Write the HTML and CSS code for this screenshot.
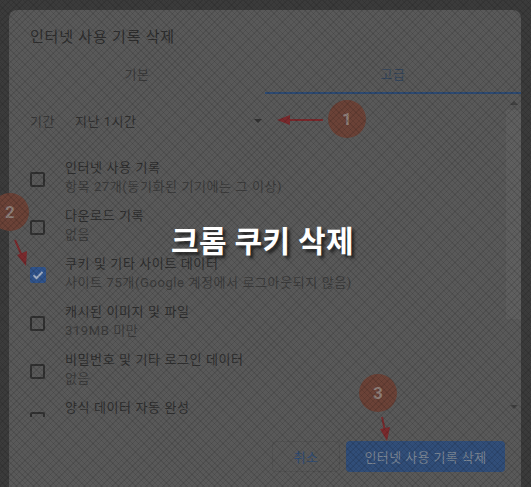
FILE: index.html
```html
<!DOCTYPE html>
<html lang="ko">
<head>
    <meta charset="UTF-8">
    <meta name="viewport" content="width=device-width, initial-scale=1.0">
    <title>인터넷 사용 기록 삭제</title>
    <link rel="stylesheet" href="styles.css">
</head>
<body>
    <div class="page">
        <div class="dialog">
            <h1 class="title">인터넷 사용 기록 삭제</h1>

            <!-- Tabs -->
            <div class="tabs">
                <div class="tab">기본</div>
                <div class="tab active">고급</div>
            </div>

            <!-- Scroll area -->
            <div class="scroll-area">
                <div class="content">
                    <div class="period">
                        <span class="period-label">기간</span>
                        <span class="select">지난 1시간 <span class="caret"></span></span>
                    </div>

                    <div class="item">
                        <span class="checkbox"></span>
                        <div class="item-text">
                            <div class="label">인터넷 사용 기록</div>
                            <div class="sub">항목 27개(동기화된 기기에는 그 이상)</div>
                        </div>
                    </div>
                    <div class="item">
                        <span class="checkbox"></span>
                        <div class="item-text">
                            <div class="label">다운로드 기록</div>
                            <div class="sub">없음</div>
                        </div>
                    </div>
                    <div class="item">
                        <span class="checkbox checked">
                            <svg width="16" height="16" viewBox="0 0 16 16"><path d="M3.5 8.2l3 3L12.5 5" fill="none" stroke="#9fadc2" stroke-width="2"/></svg>
                        </span>
                        <div class="item-text">
                            <div class="label">쿠키 및 기타 사이트 데이터</div>
                            <div class="sub">사이트 75개(Google 계정에서 로그아웃되지 않음)</div>
                        </div>
                    </div>
                    <div class="item">
                        <span class="checkbox"></span>
                        <div class="item-text">
                            <div class="label">캐시된 이미지 및 파일</div>
                            <div class="sub">319MB 미만</div>
                        </div>
                    </div>
                    <div class="item">
                        <span class="checkbox"></span>
                        <div class="item-text">
                            <div class="label">비밀번호 및 기타 로그인 데이터</div>
                            <div class="sub">없음</div>
                        </div>
                    </div>
                    <div class="item">
                        <span class="checkbox"></span>
                        <div class="item-text">
                            <div class="label">양식 데이터 자동 완성</div>
                            <div class="sub">&nbsp;</div>
                        </div>
                    </div>
                </div>
                <div class="scrollbar">
                    <span class="sb-up"></span>
                    <span class="sb-thumb"></span>
                    <span class="sb-down"></span>
                </div>
            </div>

            <!-- Buttons -->
            <div class="actions">
                <button class="btn-cancel">취소</button>
                <button class="btn-delete">인터넷 사용 기록 삭제</button>
            </div>
        </div>
    </div>

    <!-- Annotations -->
    <div class="marker m1">1</div>
    <div class="marker m2">2</div>
    <div class="marker m3">3</div>
    <svg class="arrows" width="531" height="487" viewBox="0 0 531 487">
        <g stroke="#7a2a2d" stroke-width="2" fill="#7a2a2d">
            <line x1="323" y1="120" x2="288" y2="120"/>
            <polygon points="277,120 290,115 290,125" stroke="none"/>
            <line x1="15" y1="240" x2="22" y2="256"/>
            <polygon points="26,266 17,255 27,251" stroke="none"/>
            <line x1="382" y1="417" x2="385" y2="431"/>
            <polygon points="387,441 380,429 390,427" stroke="none"/>
        </g>
    </svg>

    <div class="dim"></div>
    <div class="caption">크롬 쿠키 삭제</div>
</body>
</html>
```

FILE: styles.css
```css
* {
    margin: 0;
    padding: 0;
    box-sizing: border-box;
}

body {
    font-family: Roboto, "Noto Sans CJK KR", sans-serif;
    background-color: #3b3b3b;
    height: 487px;
    overflow: hidden;
    color: #313131;
}

.page {
    padding: 10px 10px 0 9px;
}

/* Dialog */
.dialog {
    width: 512px;
    height: 477px;
    background-color: #595959;
    border-radius: 8px 8px 0 0;
    display: flex;
    flex-direction: column;
}

.title {
    font-size: 15px;
    font-weight: normal;
    line-height: 22px;
    letter-spacing: 0.8px;
    padding: 16px 21px 0;
    color: #2e2e2e;
}

.tabs {
    display: grid;
    grid-template-columns: 1fr 1fr;
}

.tab {
    height: 46px;
    padding-top: 6px;
    display: flex;
    align-items: center;
    justify-content: center;
    font-size: 13px;
    letter-spacing: 0.5px;
    color: #3b3b3b;
    border-bottom: 2px solid transparent;
}

.tab.active {
    color: #34465c;
    border-bottom-color: #2d4a72;
}

/* Scroll area */
.scroll-area {
    display: flex;
    height: 323px;
    overflow: hidden;
}

.content {
    flex: 1;
    padding: 14px 0 0 21px;
}

.period {
    display: flex;
    align-items: center;
    height: 24px;
    font-size: 13px;
    letter-spacing: 0.5px;
    margin-bottom: 25px;
}

.period-label {
    width: 45px;
    color: #3a3a3a;
}

.select {
    width: 187px;
    display: flex;
    align-items: center;
    justify-content: space-between;
    color: #323232;
}

.caret {
    width: 0;
    height: 0;
    border-left: 4px solid transparent;
    border-right: 4px solid transparent;
    border-top: 4px solid #333;
    margin-top: 2px;
}

.item {
    display: flex;
    align-items: center;
    height: 48px;
    padding-bottom: 8px;
}

.checkbox {
    width: 15px;
    height: 15px;
    border: 2px solid #313131;
    border-radius: 2px;
    margin: 4px 20px 0 0;
    flex-shrink: 0;
    display: flex;
}

.checkbox.checked {
    width: 16px;
    height: 16px;
    margin-right: 19px;
    border: none;
    background-color: #30548c;
}

.item-text {
    font-size: 13px;
    line-height: 19px;
    letter-spacing: 0.6px;
}

.label {
    color: #2f2f2f;
}

.sub {
    color: #3c3c3c;
}

/* Fake scrollbar */
.scrollbar {
    width: 15px;
    display: flex;
    flex-direction: column;
    align-items: center;
    padding-top: 7px;
}

.sb-up,
.sb-down {
    width: 0;
    height: 0;
    border-left: 4px solid transparent;
    border-right: 4px solid transparent;
}

.sb-up {
    border-bottom: 4px solid #414141;
}

.sb-down {
    border-top: 4px solid #414141;
    margin-top: 86px;
}

.sb-thumb {
    width: 15px;
    height: 209px;
    margin-top: 5px;
    background-color: #5f5f5f;
}

/* Buttons */
.actions {
    display: flex;
    justify-content: flex-end;
    gap: 6px;
    padding: 24px 16px 0 0;
}

.actions button {
    font-family: inherit;
    font-size: 13px;
    letter-spacing: 0.4px;
    height: 31px;
    border-radius: 4px;
}

.btn-cancel {
    width: 68px;
    background: none;
    border: 1px solid #525252;
    color: #2e4c75;
}

.btn-delete {
    width: 159px;
    background-color: #314e79;
    border: none;
    color: #7a8594;
}

/* Annotations */
.marker {
    position: absolute;
    width: 38px;
    height: 38px;
    border-radius: 50%;
    background-color: #6b4237;
    color: #8d7d77;
    font-size: 17px;
    font-weight: bold;
    display: flex;
    align-items: center;
    justify-content: center;
}

.m1 { left: 328px; top: 100px; }
.m2 { left: -9px; top: 193px; }
.m3 { left: 359px; top: 374px; }

.arrows {
    position: absolute;
    left: 0;
    top: 0;
}

.dim {
    position: absolute;
    inset: 0;
    pointer-events: none;
    background-image:
        repeating-linear-gradient(45deg, rgba(0, 0, 0, 0.1) 0 1px, transparent 1px 4px),
        repeating-linear-gradient(-45deg, rgba(0, 0, 0, 0.1) 0 1px, transparent 1px 4px);
}

.caption {
    position: absolute;
    left: 171px;
    top: 217px;
    font-size: 30px;
    font-weight: bold;
    letter-spacing: 0.3px;
    color: #fff;
    text-shadow: 3px 3px 3px rgba(0, 0, 0, 0.6);
}
```
